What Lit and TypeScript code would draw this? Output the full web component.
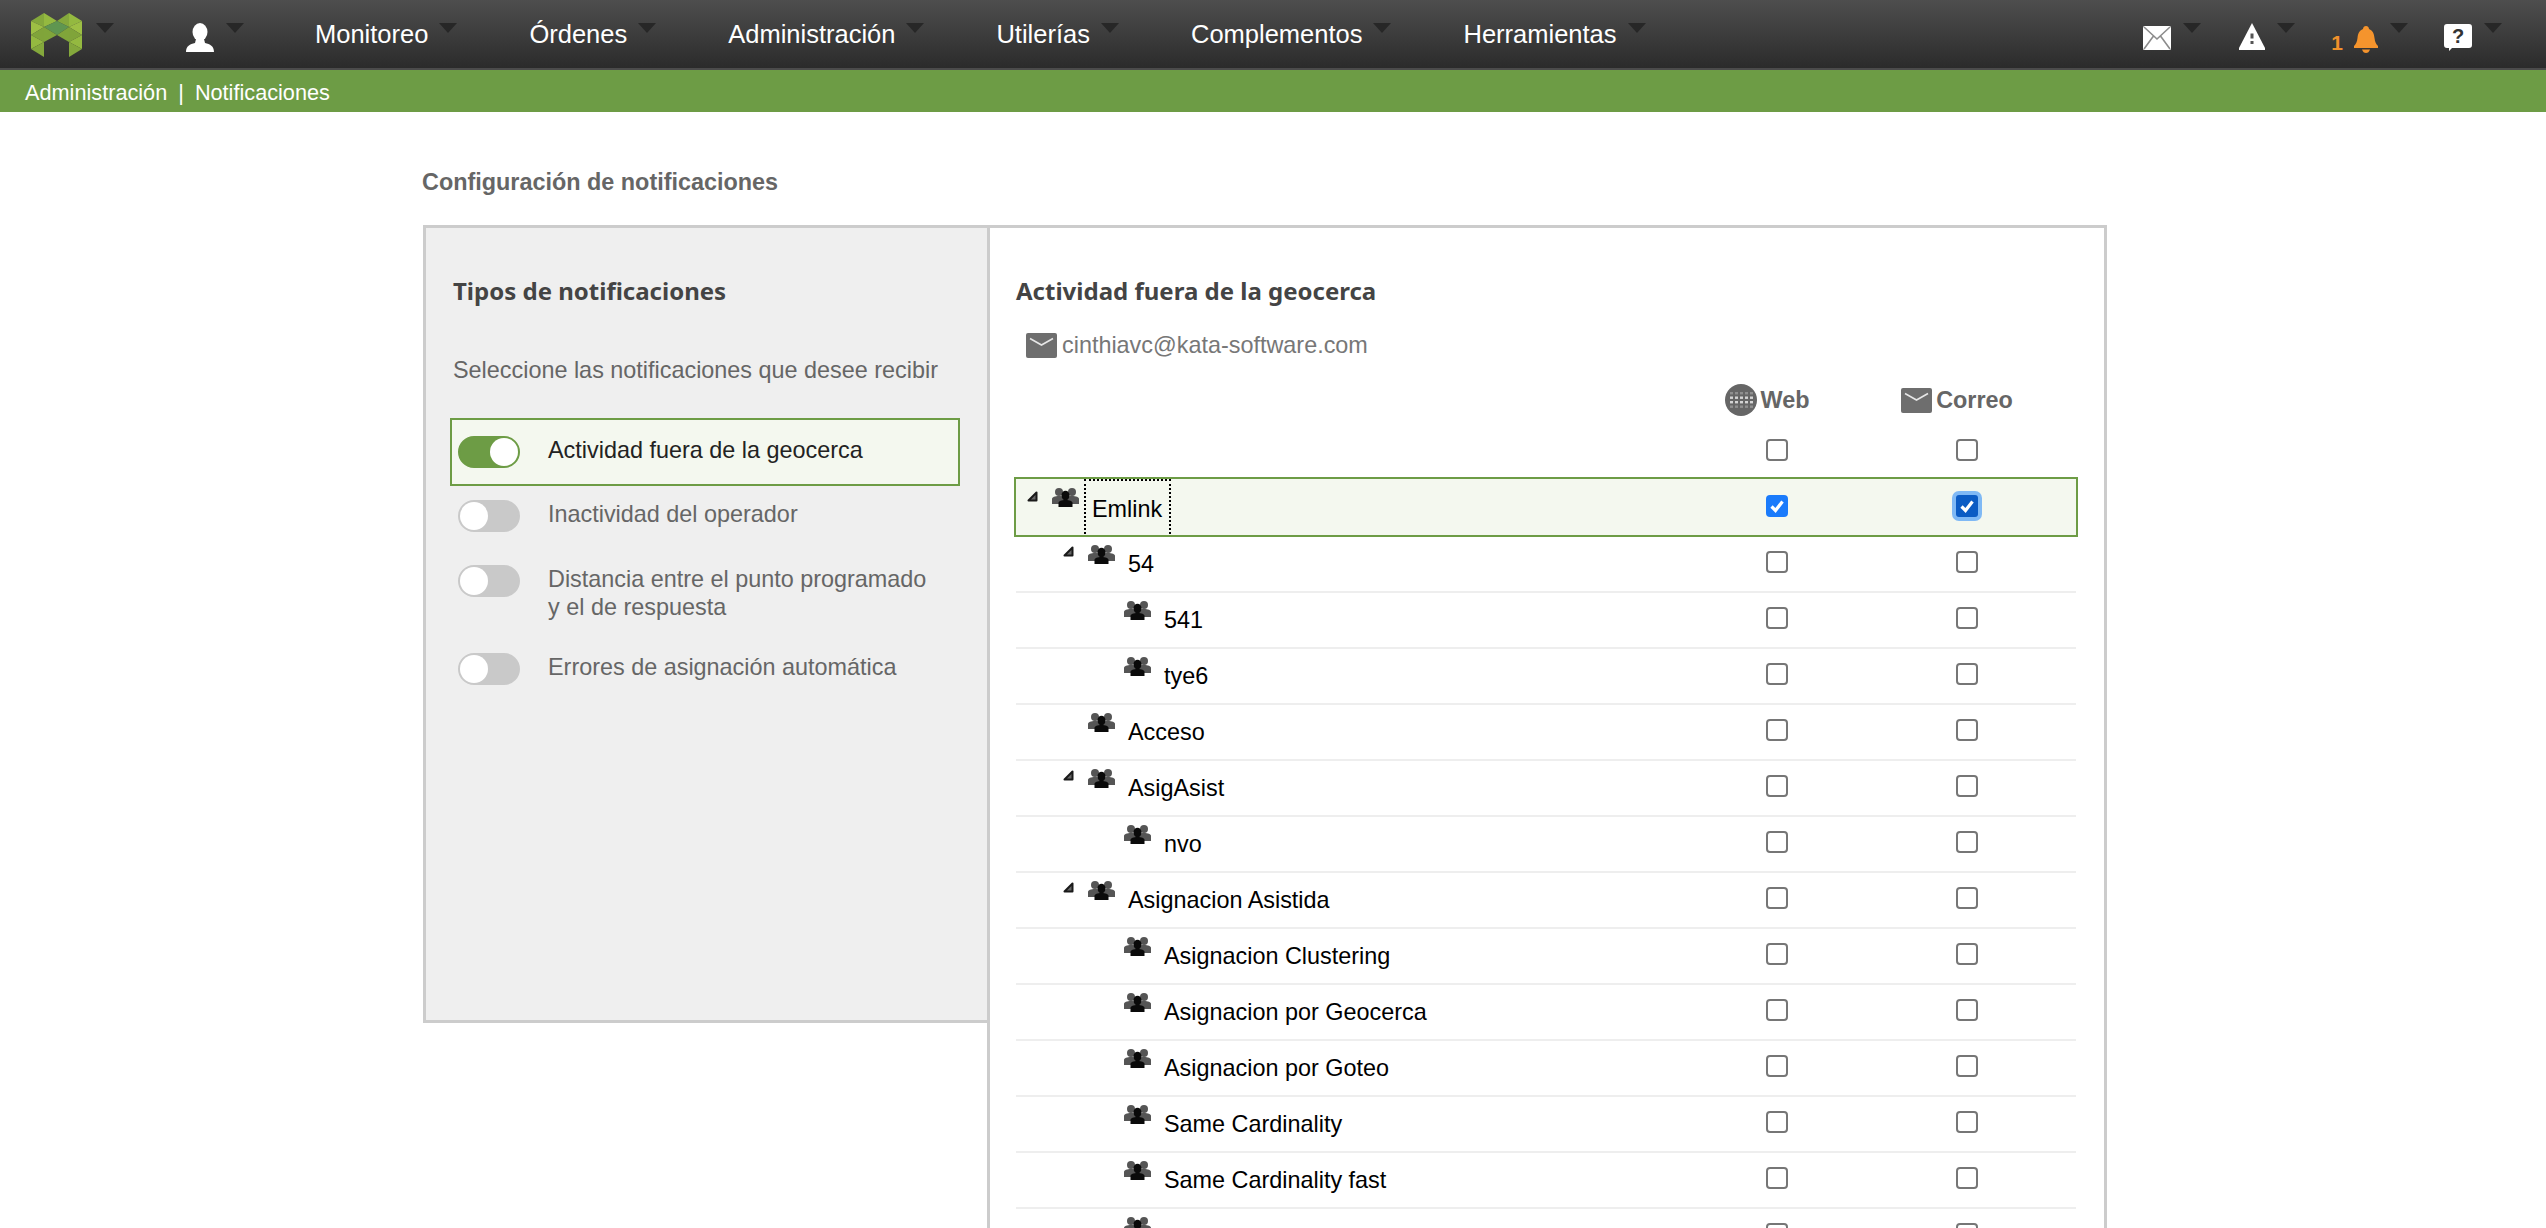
import { LitElement, html, css, svg } from 'lit';
import { customElement } from 'lit/decorators.js';
import { classMap } from 'lit/directives/class-map.js';

// level = tree depth, open = has the little expand arrow
const ROWS = [
  { name: '54', level: 1, open: true },
  { name: '541', level: 2, open: false },
  { name: 'tye6', level: 2, open: false },
  { name: 'Acceso', level: 1, open: false },
  { name: 'AsigAsist', level: 1, open: true },
  { name: 'nvo', level: 2, open: false },
  { name: 'Asignacion Asistida', level: 1, open: true },
  { name: 'Asignacion Clustering', level: 2, open: false },
  { name: 'Asignacion por Geocerca', level: 2, open: false },
  { name: 'Asignacion por Goteo', level: 2, open: false },
  { name: 'Same Cardinality', level: 2, open: false },
  { name: 'Same Cardinality fast', level: 2, open: false },
  { name: '', level: 2, open: false },
];

const NAV = ['Monitoreo', 'Órdenes', 'Administración', 'Utilerías', 'Complementos', 'Herramientas'];

const logo = html`<svg class="logo" width="51" height="44" viewBox="0 0 51 44">
  <polygon points="0,8 13,0 13,14" fill="#84a83c"/>
  <polygon points="13,0 26,8 13,14" fill="#94b940"/>
  <polygon points="38,0 26,8 38,14" fill="#84a83c"/>
  <polygon points="38,0 51,8 38,14" fill="#94b940"/>
  <polygon points="0,8 13,14 0,22" fill="#9dbf44"/>
  <polygon points="51,8 38,14 51,22" fill="#9dbf44"/>
  <polygon points="13,14 26,8 38,14 26,22" fill="#5f9650"/>
  <polygon points="0,22 13,14 13,29" fill="#80a43a"/>
  <polygon points="13,14 26,22 13,29" fill="#80a53a"/>
  <polygon points="38,14 26,22 38,29" fill="#80a53a"/>
  <polygon points="51,22 38,14 38,29" fill="#80a43a"/>
  <polygon points="0,22 13,29 0,36" fill="#94b940"/>
  <polygon points="51,22 38,29 51,36" fill="#94b940"/>
  <polygon points="0,36 13,29 13,44" fill="#84a83c"/>
  <polygon points="51,36 38,29 38,44" fill="#84a83c"/>
</svg>`;

const userIcon = html`<svg class="user" width="28" height="29" viewBox="0 0 28 29">
  <ellipse cx="14" cy="9" rx="7.5" ry="9" fill="#fff"/>
  <path d="M10 16 L18 16 L19 20 C24 21 28 23 28 29 L0 29 C0 23 4 21 9 20 Z" fill="#fff"/>
</svg>`;

const mailTop = html`<svg class="ic-mail" width="28" height="24" viewBox="0 0 28 24">
  <rect width="28" height="24" rx="1.5" fill="#fff"/>
  <path d="M1 1 L14 13 L27 1 M1 23 L10.5 10 M27 23 L17.5 10" fill="none" stroke="#8c8c8c" stroke-width="1.6"/>
</svg>`;

const warnTop = html`<svg class="ic-warn" width="26" height="27" viewBox="0 0 26 27">
  <path d="M13 0 L26 25 L26 27 L0 27 L0 25 Z" fill="#fff"/>
  <rect x="11.5" y="10.5" width="3" height="5" fill="#555"/>
  <rect x="11.5" y="18" width="3" height="3" fill="#555"/>
</svg>`;

const bellTop = html`<svg class="ic-bell" width="24" height="27" viewBox="0 0 24 27">
  <path d="M12 0 C14 0 15 1.500 15 3 C19 4.500 20 8 20.500 12 C21 16 22 18 24 20 L24 22 L0 22 L0 20 C2 18 3 16 3.500 12 C4 8 5 4.500 9 3 C9 1.500 10 0 12 0 Z" fill="#f5942d"/>
  <path d="M8 23.500 L16 23.500 C15 26 14 27 12 27 C10 27 9 26 8 23.500 Z" fill="#f5942d"/>
</svg>`;

const helpTop = html`<svg class="ic-help" width="28" height="27" viewBox="0 0 28 27">
  <path d="M3 0 L25 0 Q28 0 28 3 L28 21 Q28 24 25 24 L8 24 L5 27 L5 24 L3 24 Q0 24 0 21 L0 3 Q0 0 3 0 Z" fill="#fff"/>
  <text x="14" y="19" text-anchor="middle" class="q">?</text>
</svg>`;

const mailGray = html`<svg class="mail-gray" width="31" height="25" viewBox="0 0 31 25">
  <rect width="31" height="25" rx="2" fill="#6e6e6e"/>
  <path d="M4 5.500 L15.500 12 L27 5.500" fill="none" stroke="#e6e6e6" stroke-width="1.6"/>
</svg>`;

const globe = html`<svg class="globe" width="32" height="32" viewBox="0 0 32 32">
  <circle cx="16" cy="16" r="16" fill="#666"/>
  ${[9, 13.500, 18, 22.500].map((y) =>
    [5, 10, 15, 20, 25].map((x) => svg`<rect x=${x} y=${y - 1} width="3" height="2.400" fill=${y === 9 || y === 22.5 ? '#8f8f8f' : '#d5d5d5'}/>`)
  )}
</svg>`;

const group = html`<svg class="group" width="27" height="19" viewBox="0 0 27 19">
  <circle cx="7" cy="4" r="4" fill="#555"/>
  <circle cx="20" cy="4" r="4" fill="#555"/>
  <path d="M0 16 L0 11 C0 9 3 8 7 8 C11 8 14 9 14 11 L14 16 Z" fill="#555"/>
  <path d="M13 16 L13 11 C13 9 16 8 20 8 C24 8 27 9 27 11 L27 16 Z" fill="#555"/>
  <ellipse cx="13.500" cy="7.500" rx="4" ry="4.800" fill="#0a0a0a"/>
  <path d="M6.500 19 L6.500 15 C6.500 13 9.500 12 13.500 12 C17.500 12 20.500 13 20.500 15 L20.500 19 Z" fill="#0a0a0a"/>
</svg>`;

const arrow = html`<svg class="arrow" width="11" height="11" viewBox="0 0 11 11">
  <polygon points="9.500,1.500 9.500,9.500 1.500,9.500" fill="#666" stroke="#1a1a1a" stroke-width="2" stroke-linejoin="round"/>
</svg>`;

const tick = html`<svg width="22" height="22" viewBox="0 0 22 22">
  <path d="M5.500 11.500 L9.500 15.500 L16.500 6.500" fill="none" stroke="#fff" stroke-width="3.200"/>
</svg>`;

@customElement('app-root')
export class AppRoot extends LitElement {
  static styles = css`
    :host {
      display: block;
      height: 100vh;
      overflow: hidden;
      background: #fff;
      font-family: "Liberation Sans", Arial, sans-serif;
      font-size: 23.4px;
    }
    /* top bar */
    .topbar {
      display: flex;
      align-items: flex-start;
      height: 68px;
      border-bottom: 2px solid #4b4b4b;
      background: linear-gradient(180deg, #4e4e4e 0%, #2b2b2b 100%);
      padding: 0 44px 0 31px;
    }
    .logo { margin-top: 13px; }
    .caret {
      width: 0;
      height: 0;
      flex: none;
      margin-top: 23px;
      border-left: 9px solid transparent;
      border-right: 9px solid transparent;
      border-top: 10px solid #272727;
    }
    .logo-cell, .user-cell, .nav-item, .tool {
      display: flex;
      align-items: flex-start;
    }
    .logo-cell { gap: 14px; width: 155px; }
    .user-cell { gap: 12px; width: 129px; }
    .user { margin-top: 23px; }
    .nav { display: flex; gap: 72px; }
    .nav-item {
      gap: 11px;
      color: #fff;
      font-size: 25.5px;
      line-height: 68px;
    }
    .tools { display: flex; gap: 38px; margin-left: auto; }
    .tool { gap: 12px; }
    .tool.tight { margin-left: -2px; }
    .ic-mail { margin-top: 26px; }
    .ic-warn { margin-top: 23px; }
    .ic-bell { margin-top: 26px; }
    .ic-help { margin-top: 24px; }
    .count {
      color: #f0912b;
      font-size: 21px;
      font-weight: 700;
      line-height: 24px;
      margin-top: 31px;
      margin-right: -1px;
    }
    .q {
      font-family: "Liberation Sans", Arial, sans-serif;
      font-size: 20px;
      font-weight: 700;
      fill: #333;
    }
    /* breadcrumb */
    .crumbs {
      display: flex;
      gap: 11px;
      align-items: center;
      height: 42px;
      padding: 3px 0 0 25px;
      box-sizing: border-box;
      background: #6d9c45;
      color: #fff;
      font-size: 21.7px;
    }
    /* body */
    .main { padding: 55px 0 0 423px; }
    .title {
      color: #666;
      font-weight: 700;
      line-height: 30px;
      margin-bottom: 28px;
      margin-left: -1px;
    }
    .panels { display: flex; align-items: flex-start; }
    .types {
      box-sizing: border-box;
      width: 564px;
      height: 798px;
      padding: 48px 0 0 27px;
      background: #efefef;
      border: 3px solid #ccc;
      border-right: none;
    }
    .detail {
      box-sizing: border-box;
      width: 1120px;
      min-height: 1100px;
      padding: 48px 28px 0 26px;
      border: 3px solid #ccc;
    }
    h2 {
      margin: 0;
      color: #444;
      font-family: "Noto Sans", sans-serif;
      font-size: 24px;
      font-weight: 700;
      line-height: 30px;
    }
    .hint {
      color: #666;
      line-height: 34px;
      margin-top: 47px;
      margin-bottom: 31px;
    }
    .item {
      box-sizing: border-box;
      display: flex;
      align-items: flex-start;
      gap: 28px;
      width: 510px;
      margin-left: -3px;
      padding: 14px 0 0 8px;
      color: #666;
      line-height: 28px;
    }
    .item.on {
      height: 68px;
      padding-top: 16px;
      padding-left: 6px;
      border: 2px solid #6d9c45;
      background: #f4f8ef;
      color: #222;
    }
    .item.h65 { height: 65px; }
    .item.h88 { height: 88px; }
    .item span { margin-top: 0; }
    .toggle {
      box-sizing: border-box;
      display: flex;
      flex: none;
      width: 62px;
      height: 32px;
      border: 2px solid #c9c9c9;
      border-radius: 16px;
      background: #c9c9c9;
    }
    .toggle.on {
      justify-content: flex-end;
      border-color: #6d9c45;
      background: #6d9c45;
    }
    .knob {
      width: 28px;
      height: 28px;
      border-radius: 50%;
      background: #fff;
    }
    .email {
      display: flex;
      align-items: center;
      gap: 5px;
      margin: 22px 0 0 10px;
      color: #777;
      line-height: 34px;
    }
    .cols {
      display: grid;
      grid-template-columns: 1fr 190px 190px 14px;
      height: 42px;
      margin-top: 18px;
      color: #666;
      font-weight: 700;
    }
    .col {
      display: flex;
      align-items: center;
      justify-content: center;
      gap: 4px;
      height: 40px;
      padding-right: 20px;
    }
    .row {
      box-sizing: border-box;
      display: grid;
      grid-template-columns: 1fr 190px 190px 14px;
      height: 56px;
      border-bottom: 2px solid #eee;
      color: #000;
    }
    .row.plain { height: 55px; border-bottom: none; }
    .row.plain .box { margin-top: 17px; }
    .row.sel {
      height: 60px;
      margin: 0 -2px;
      border: 2px solid #6d9c45;
      background: #f4f8ef;
    }
    .row.sel .box { margin-top: 16px; }
    .cell { display: flex; align-items: flex-start; justify-content: center; }
    .label { display: flex; align-items: flex-start; justify-content: flex-start; }
    .arrow { flex: none; margin-top: 9px; margin-right: 14px; }
    .spacer { flex: none; width: 25px; }
    .group { flex: none; margin-top: 8px; }
    .name { margin-left: 13px; line-height: 55px; }
    .row.sel .arrow { margin-top: 12px; }
    .row.sel .group { margin-top: 9px; }
    .row.sel .name {
      box-sizing: border-box;
      height: 55px;
      margin-left: 5px;
      padding: 3px 7px 0 6px;
      border: 2px dotted #000;
      border-bottom: none;
      line-height: 51px;
    }
    .box {
      box-sizing: border-box;
      width: 22px;
      height: 22px;
      margin-top: 14px;
      border: 2px solid #767676;
      border-radius: 4px;
      background: #fff;
    }
    .box.on {
      border: none;
      background: #1a7bfb;
    }
    .box.focus {
      background: #0b5cc4;
      border-radius: 3px;
      box-shadow: 0 0 0 4px #7fb9f5;
    }
  `;

  box(on = false, focus = false) {
    return html`<div class="cell"><div class=${classMap({ box: true, on, focus })}>${on ? tick : ''}</div></div>`;
  }

  renderRow(r: { name: string; level: number; open: boolean }) {
    return html`<div class="row">
      <div class="label" style="padding-left:${11 + r.level * 36}px">
        ${r.open ? arrow : html`<div class="spacer"></div>`}
        ${group}
        <div class="name">${r.name}</div>
      </div>
      ${this.box()}${this.box()}<div></div>
    </div>`;
  }

  render() {
    return html`
      <div class="topbar">
        <div class="logo-cell">${logo}<div class="caret"></div></div>
        <div class="user-cell">${userIcon}<div class="caret"></div></div>
        <div class="nav">
          ${NAV.map((n) => html`<div class="nav-item">${n}<div class="caret"></div></div>`)}
        </div>
        <div class="tools">
          <div class="tool">${mailTop}<div class="caret"></div></div>
          <div class="tool">${warnTop}<div class="caret"></div></div>
          <div class="tool tight"><div class="count">1</div>${bellTop}<div class="caret"></div></div>
          <div class="tool tight">${helpTop}<div class="caret"></div></div>
        </div>
      </div>
      <div class="crumbs"><span>Administración</span><span>|</span><span>Notificaciones</span></div>
      <div class="main">
        <div class="title">Configuración de notificaciones</div>
        <div class="panels">
          <div class="types">
            <h2>Tipos de notificaciones</h2>
            <div class="hint">Seleccione las notificaciones que desee recibir</div>
            <div class="item on">
              <div class="toggle on"><div class="knob"></div></div>
              <span>Actividad fuera de la geocerca</span>
            </div>
            <div class="item h65">
              <div class="toggle"><div class="knob"></div></div>
              <span>Inactividad del operador</span>
            </div>
            <div class="item h88">
              <div class="toggle"><div class="knob"></div></div>
              <span>Distancia entre el punto programado<br />y el de respuesta</span>
            </div>
            <div class="item">
              <div class="toggle"><div class="knob"></div></div>
              <span>Errores de asignación automática</span>
            </div>
          </div>
          <div class="detail">
            <h2>Actividad fuera de la geocerca</h2>
            <div class="email">${mailGray}cinthiavc@kata-software.com</div>
            <div class="cols">
              <div></div>
              <div class="col">${globe}Web</div>
              <div class="col">${mailGray}Correo</div>
              <div></div>
            </div>
            <div class="row plain">
              <div></div>${this.box()}${this.box()}<div></div>
            </div>
            <div class="row sel">
              <div class="label" style="padding-left:11px">
                ${arrow}${group}
                <div class="name">Emlink</div>
              </div>
              ${this.box(true)}${this.box(true, true)}<div></div>
            </div>
            ${ROWS.map((r) => this.renderRow(r))}
          </div>
        </div>
      </div>
    `;
  }
}
